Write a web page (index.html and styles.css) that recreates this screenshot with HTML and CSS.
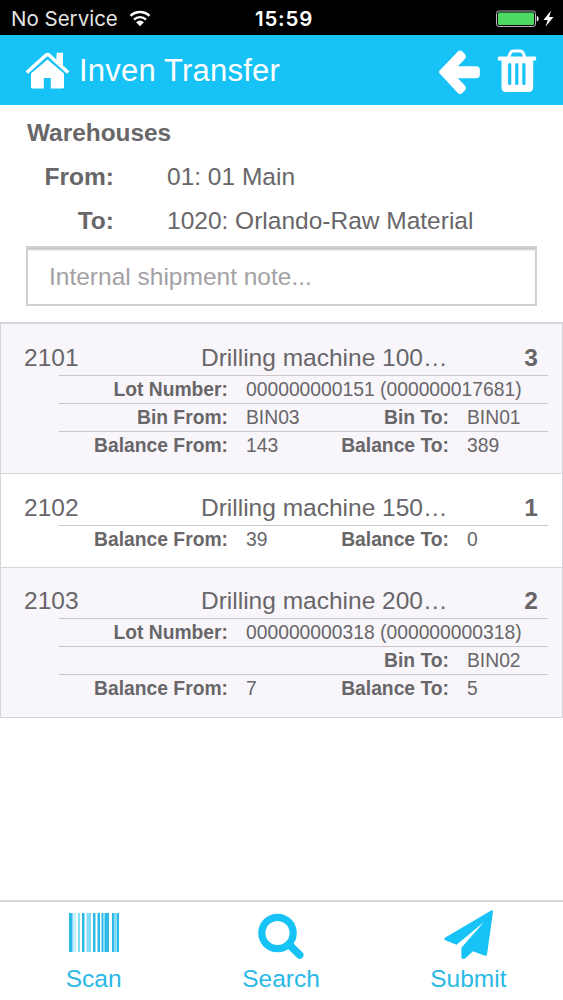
FILE: index.html
```html
<!DOCTYPE html>
<html lang="en">
<head>
  <meta charset="UTF-8">
  <meta name="viewport" content="width=device-width, initial-scale=1.0">
  <title>Inven Transfer</title>
  <link rel="stylesheet" href="styles.css">
</head>
<body>
  <div class="status-bar">
    <div class="carrier">
      <span>No Service</span>
      <svg class="wifi" viewBox="0 0 22 17" width="22" height="17">
        <path d="M1.5 5.8a13.6 13.6 0 0 1 19 0M5 9.6a8.6 8.6 0 0 1 12 0" fill="none" stroke="#fff" stroke-width="2.4"/>
        <path d="M11 16.2l-3.9-4a5.6 5.6 0 0 1 7.8 0z" fill="#fff"/>
      </svg>
    </div>
    <div class="clock">15:59</div>
    <div class="power">
      <svg viewBox="0 0 60 20" width="60" height="20">
        <rect x="1.500" y="2" width="39" height="15.500" rx="2.500" fill="#000" stroke="#b9b9b9" stroke-width="1"/>
        <rect x="3" y="3.500" width="36" height="12.500" rx="1" fill="#4cd964"/>
        <path d="M41.800 7c2.400.3 2.400 5.200 0 5.500z" fill="#fff"/>
        <path d="M56 1.500l-7.500 9.500h4.200L50.500 17.800l8-9.800h-4.300z" fill="#fff"/>
      </svg>
    </div>
  </div>

  <div class="header">
    <svg class="home-icon" viewBox="0 0 44 37" width="45" height="37">
      <path d="M22 7.500L5.500 21.500V35a1.500 1.500 0 0 0 1.500 1.500h11.300V26h7v10.500H37a1.500 1.500 0 0 0 1.500-1.500V21.500z" fill="#fff"/>
      <path d="M1.300 20.500L20 3.500q2-1.700 4 0l18.700 17" fill="none" stroke="#fff" stroke-width="3.600"/>
      <path d="M31 .8h6.500v14.500l-6.500-6z" fill="#fff"/>
    </svg>
    <h1>Inven Transfer</h1>
    <svg class="back-icon" viewBox="0 0 42 44" width="42" height="44">
      <path d="M.7 20.600L18.600 1.800q2.400-2.400 5 0l2.200 2.200q2.400 2.500 0 5l-6.900 7.300h18q4 0 4 4v4q0 4-4 4h-18l6.900 7.300q2.400 2.500 0 5l-2.200 2.100q-2.600 2.500-5 0L.7 23.400q-1.200-1.400 0-2.800z" fill="#fff"/>
    </svg>
    <svg class="trash-icon" viewBox="0 0 40 44" width="40" height="44">
      <path d="M11.500 8.500l2-4.800Q14.400 2 16.500 2h6.500q2.100 0 3 1.700l2 4.800" fill="none" stroke="#fff" stroke-width="3"/>
      <path d="M2 7.500h36q1.200 0 1.200 1.200v1.600q0 1.200-1.200 1.200h-1.800V37.500q0 5.500-4.500 5.500H9q-4.500 0-4.500-5.500V11.500H2Q.8 11.500.8 10.300V8.700Q.8 7.500 2 7.500z" fill="#fff"/>
      <path d="M12.700 15.500v19M19.800 15.500v19M26.900 15.500v19" stroke="#16c2f6" stroke-width="3.200" stroke-linecap="round"/>
    </svg>
  </div>

  <div class="content">
    <div class="warehouses">
      <h2>Warehouses</h2>
      <div class="warehouse">
        <div class="warehouse-label">From:</div>
        <div class="warehouse-name">01: 01 Main</div>
      </div>
      <div class="warehouse">
        <div class="warehouse-label">To:</div>
        <div class="warehouse-name">1020: Orlando-Raw Material</div>
      </div>
      <input class="note" type="text" placeholder="Internal shipment note...">
    </div>

    <div class="items">
      <div class="item">
        <div class="item-title">
          <div class="code">2101</div>
          <div class="name">Drilling machine 100…</div>
          <div class="qty">3</div>
        </div>
        <div class="item-row">
          <b>Lot Number:</b><span class="wide">000000000151 (000000017681)</span>
        </div>
        <div class="item-row">
          <b>Bin From:</b><span>BIN03</span><b>Bin To:</b><span>BIN01</span>
        </div>
        <div class="item-row">
          <b>Balance From:</b><span>143</span><b>Balance To:</b><span>389</span>
        </div>
      </div>

      <div class="item">
        <div class="item-title">
          <div class="code">2102</div>
          <div class="name">Drilling machine 150…</div>
          <div class="qty">1</div>
        </div>
        <div class="item-row">
          <b>Balance From:</b><span>39</span><b>Balance To:</b><span>0</span>
        </div>
      </div>

      <div class="item">
        <div class="item-title">
          <div class="code">2103</div>
          <div class="name">Drilling machine 200…</div>
          <div class="qty">2</div>
        </div>
        <div class="item-row">
          <b>Lot Number:</b><span class="wide">000000000318 (000000000318)</span>
        </div>
        <div class="item-row">
          <b></b><span></span><b>Bin To:</b><span>BIN02</span>
        </div>
        <div class="item-row">
          <b>Balance From:</b><span>7</span><b>Balance To:</b><span>5</span>
        </div>
      </div>
    </div>
  </div>

  <div class="tabs">
    <div class="tab">
      <svg viewBox="0 0 50 50" width="50" height="50">
        <g fill="#2bb9e8">
          <rect x="0" y="3" width="3" height="39"/>
          <rect x="13" y="3" width="2.500" height="39"/>
          <rect x="24" y="3" width="2.500" height="39"/>
          <rect x="28.500" y="3" width="2.500" height="39"/>
          <rect x="32.500" y="3" width="2" height="39"/>
          <rect x="36" y="3" width="4" height="39"/>
          <rect x="43" y="3" width="2.500" height="39"/>
          <rect x="47.500" y="3" width="2.500" height="39"/>
        </g>
        <g fill="#83dcf7">
          <rect x="3" y="3" width="1.500" height="39"/>
          <rect x="9" y="3" width="2" height="39"/>
          <rect x="17.500" y="3" width="4.500" height="39"/>
          <rect x="34.500" y="3" width="1.500" height="39"/>
          <rect x="45.500" y="3" width="2" height="39"/>
        </g>
        <rect x="4.500" y="3" width="2.500" height="39" fill="#cbeef8"/>
      </svg>
      <div>Scan</div>
    </div>
    <div class="tab">
      <svg viewBox="0 0 50 50" width="50" height="50">
        <circle cx="21.500" cy="23" r="15.700" fill="none" stroke="#16c2f6" stroke-width="7.200"/>
        <path d="M33 34.500l10.700 10.500" stroke="#16c2f6" stroke-width="7.600" stroke-linecap="round"/>
      </svg>
      <div>Search</div>
    </div>
    <div class="tab">
      <svg viewBox="0 0 50 50" width="50" height="50">
        <path d="M48.200.6q1.800-1 1.800 1.200L44 44.500q-.4 1.800-2.200 1.200L30 41.300l-8 7.200q-3.400 1.200-3.600-1V37.800L41 12 13.500 34.800 2.300 30.200q-2-1.300 0-2.600z" fill="#16c2f6"/>
      </svg>
      <div>Submit</div>
    </div>
  </div>
</body>
</html>
```
FILE: styles.css
```css
* {
  box-sizing: border-box;
}

body {
  margin: 0;
  height: 1000px;
  display: flex;
  flex-direction: column;
  background: #fff;
  color: #686669;
  font-family: "Liberation Sans", Arial, sans-serif;
  font-size: 24.5px;
  overflow: hidden;
}

.status-bar {
  height: 35px;
  padding: 0 8px 0 11px;
  display: grid;
  grid-template-columns: 1fr auto 1fr;
  align-items: center;
  background: #000;
  color: #fff;
  font-family: Inter, sans-serif;
  font-size: 20.5px;
  line-height: 37px;
}

.carrier {
  display: flex;
  align-items: center;
  gap: 11px;
  color: #e4e4e4;
}

.clock {
  padding-left: 2px;
  font-weight: 600;
  letter-spacing: 0.8px;
}

.power {
  display: flex;
  justify-content: flex-end;
}

.header {
  height: 70px;
  padding: 0 26px 0 25px;
  display: flex;
  align-items: center;
  background: #16c2f6;
  color: #fff;
}

.header h1 {
  flex: 1;
  margin: 0 0 0 9px;
  font-size: 31px;
  font-weight: normal;
  line-height: 70px;
  letter-spacing: 0.2px;
  padding-top: 1px;
}

.back-icon {
  margin-top: 3px;
}

.trash-icon {
  margin-left: 16px;
  margin-top: 1px;
}

.content {
  flex: 1;
}

.warehouses {
  padding: 6px 26px 16px;
}

.warehouses h2 {
  margin: 0;
  padding-left: 1px;
  font-size: 24.4px;
  line-height: 44px;
}

.warehouse {
  display: flex;
  line-height: 44px;
}

.warehouse-label {
  width: 88px;
  margin-right: 53px;
  text-align: right;
  font-weight: bold;
}

.note {
  display: block;
  width: 511px;
  height: 60px;
  margin-top: 3px;
  padding: 2px 21px 0;
  border: 2px solid #d2d0d3;
  border-radius: 0;
  background: #fff;
  box-shadow: inset 0 3px 2px -1px #c6c6c6;
  font-family: inherit;
  font-size: 24.5px;
}

.note::placeholder {
  color: #a3a1a4;
}

.items {
  border: 1px solid #d6d4d8;
  border-width: 2px 1px 0;
}

.item {
  padding: 0 14px 14px 23px;
  border-bottom: 1px solid #d6d4d8;
}

.item:nth-child(odd) {
  background: #f8f6fb;
}

.item-title {
  height: 51px;
  padding: 13px 10px 0 0;
  display: flex;
  line-height: 42px;
}

.item-title .code {
  width: 177px;
}

.item-title .name {
  flex: 1;
}

.item-title .qty {
  font-weight: bold;
}

.item-row {
  height: 28px;
  margin-left: 35px;
  display: grid;
  grid-template-columns: 169px 101px 120px 1fr;
  border-top: 1px solid #c9c7cb;
  font-size: 19.3px;
  line-height: 28px;
}

.item-row b {
  text-align: right;
  white-space: nowrap;
}

.item-row span {
  padding-left: 18px;
  white-space: nowrap;
}

.item-row .wide {
  grid-column: span 3;
}

.item:last-child .item-title {
  height: 50px;
  padding-top: 12px;
}

.item:last-child {
  padding-bottom: 15px;
}

.tabs {
  height: 100px;
  padding: 8px 1px 0 0;
  display: flex;
  border-top: 2px solid #d6d4d8;
  color: #29b9e6;
}

.tab {
  flex: 1;
  display: flex;
  flex-direction: column;
  align-items: center;
  line-height: 38px;
}
```
